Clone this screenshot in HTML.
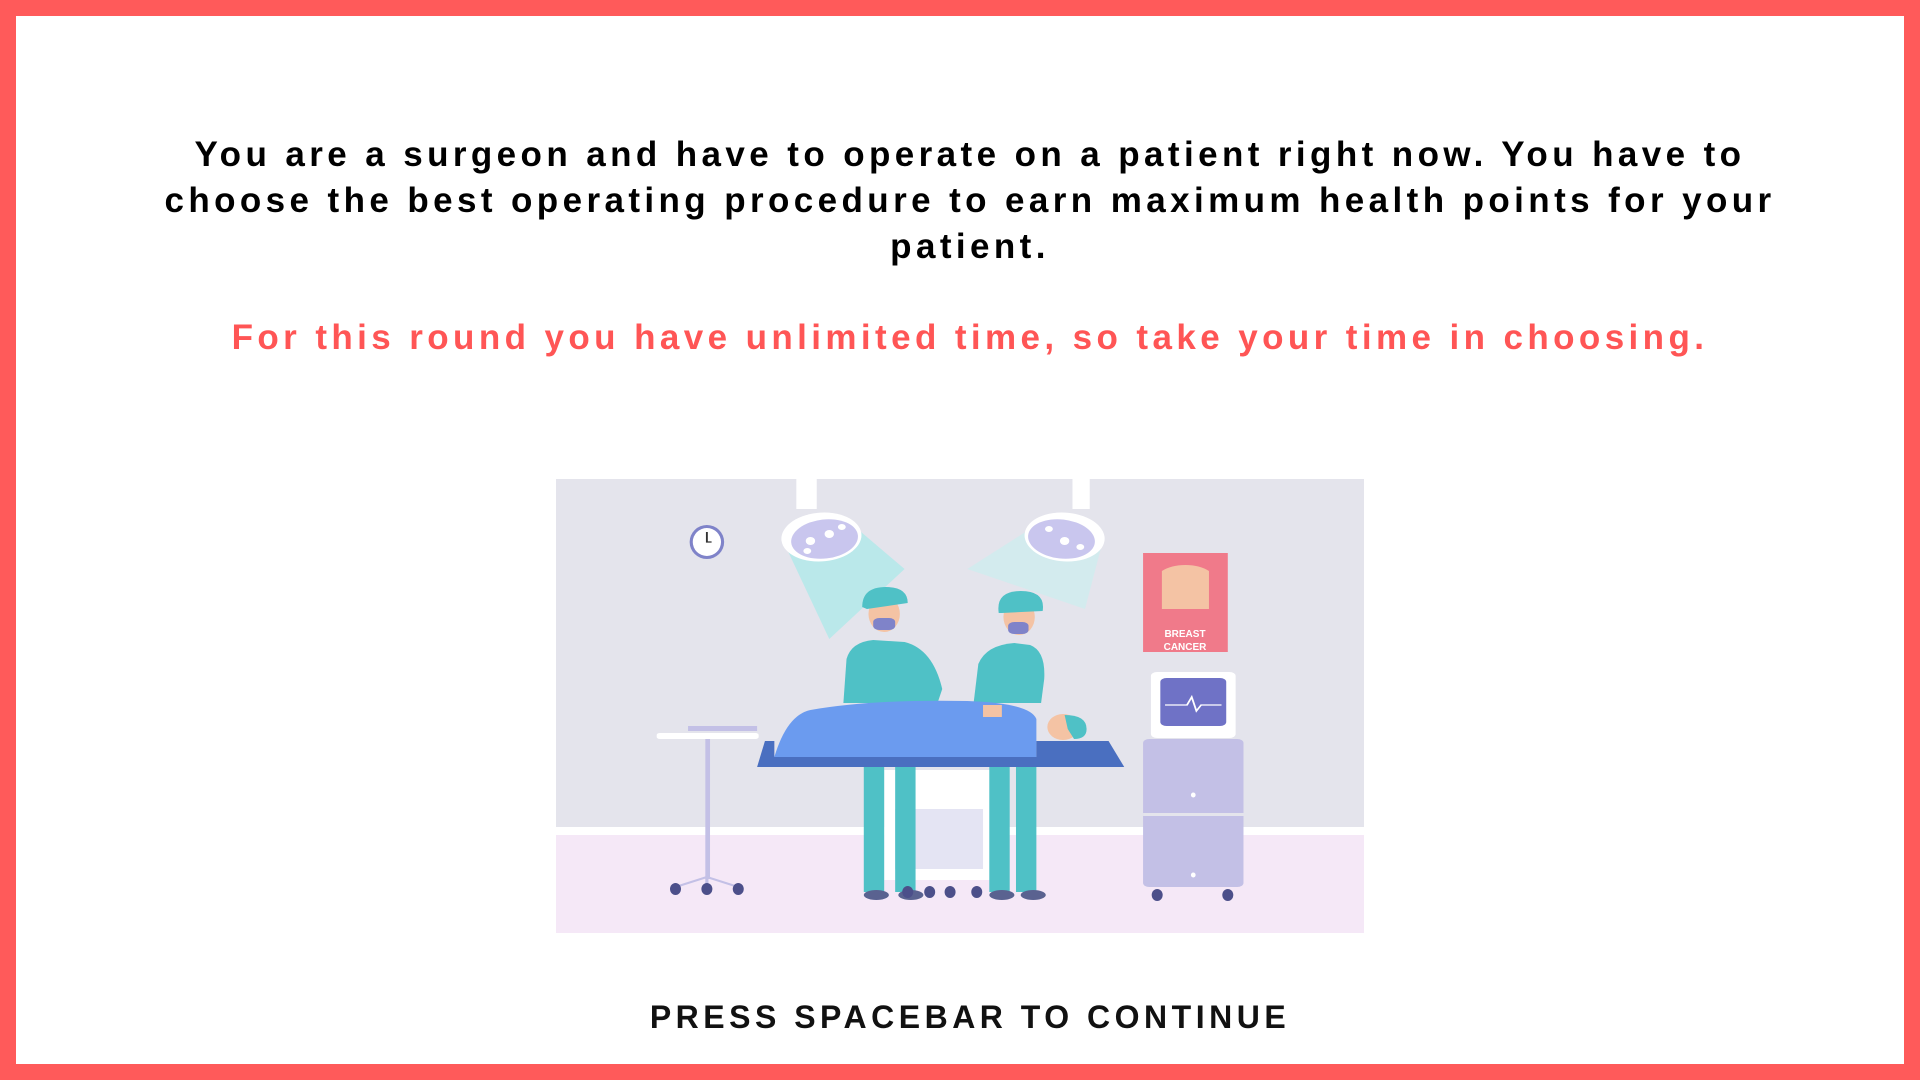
<!DOCTYPE html>
<html><head><meta charset="utf-8"><style>
html,body{margin:0;padding:0;}
body{width:1920px;height:1080px;position:relative;background:#fff;overflow:hidden;font-family:"Comic Sans MS","Liberation Sans",sans-serif;}
.frame{position:absolute;left:0;top:0;width:1920px;height:1080px;box-sizing:border-box;border:16px solid #ff5a5a;}
.t{position:absolute;left:140px;width:1660px;text-align:center;font-size:35px;font-weight:bold;letter-spacing:4.4px;color:#000;line-height:46px;}
.r{color:#ff5555;}
.btn{position:absolute;left:10px;width:1920px;top:999px;text-align:center;font-weight:bold;font-size:32px;letter-spacing:4.5px;color:#111;}
svg{position:absolute;left:556px;top:479px;}
</style></head><body>
<div class="frame"></div>
<div class="t" style="top:132px">You are a surgeon and have to operate on a patient right now. You have to choose the best operating procedure to earn maximum health points for your patient.</div>
<div class="t r" style="top:315px">For this round you have unlimited time, so take your time in choosing.</div>
<svg width="808" height="454" viewBox="0 0 808 454">
<rect width="808" height="454" fill="#e4e4ec"/>
<rect y="348" width="808" height="8" fill="#fff"/>
<rect y="356" width="808" height="98" fill="#f5e8f7"/>
<g transform="translate(3.4,0) scale(1.569,1)">
<ellipse cx="94" cy="63" rx="11" ry="17" fill="#7f83c9"/><ellipse cx="94" cy="63" rx="9" ry="14" fill="#fff"/>
<path d="M94 53V63H97" stroke="#333" stroke-width="1.2" fill="none"/>
<polygon points="145,70 190,50 220,90 172,160" fill="#a8eaea" opacity=".7"/>
<polygon points="300,50 345,70 335,130 260,90" fill="#c8f0f0" opacity=".6"/>
<rect x="151" y="0" width="13" height="30" fill="#fff"/>
<rect x="327" y="0" width="11" height="30" fill="#fff"/>
<ellipse cx="167" cy="58" rx="26" ry="24" transform="rotate(-30 167 58)" fill="#fff"/>
<ellipse cx="169" cy="60" rx="22" ry="19" transform="rotate(-30 169 60)" fill="#c9c6ee"/>
<ellipse cx="322" cy="58" rx="26" ry="24" transform="rotate(30 322 58)" fill="#fff"/>
<ellipse cx="320" cy="60" rx="22" ry="19" transform="rotate(30 320 60)" fill="#c9c6ee"/>
<g fill="#fff"><ellipse cx="160" cy="62" rx="3" ry="4"/><ellipse cx="172" cy="55" rx="3" ry="4"/><ellipse cx="180" cy="48" rx="2.5" ry="3"/><ellipse cx="158" cy="72" rx="2.5" ry="3"/><ellipse cx="312" cy="50" rx="2.5" ry="3"/><ellipse cx="322" cy="62" rx="3" ry="4"/><ellipse cx="332" cy="68" rx="2.5" ry="3"/></g>
<rect x="372" y="74" width="54" height="99" fill="#f07a8a"/>
<path d="M384 92Q390 86 399 86Q408 86 414 92V130H384Z" fill="#f4c3a4"/>
<rect x="377" y="193" width="54" height="66" rx="4" fill="#fff"/>
<rect x="383" y="199" width="42" height="48" rx="4" fill="#6f72c6"/>
<path d="M386 226H400L403 218L406 232L409 226H422" stroke="#fff" stroke-width="1.2" fill="none"/>
<rect x="372" y="260" width="64" height="148" rx="4" fill="#c3c0e6"/>
<rect x="372" y="334" width="64" height="3" fill="#e4e4ec"/>
<ellipse cx="404" cy="316" rx="1.5" ry="2.5" fill="#fff"/><ellipse cx="404" cy="396" rx="1.5" ry="2.5" fill="#fff"/>
<ellipse cx="381" cy="416" rx="3.5" ry="6" fill="#4c4f8a"/><ellipse cx="426" cy="416" rx="3.5" ry="6" fill="#4c4f8a"/>
<rect x="62" y="254" width="65" height="6" rx="2" fill="#fff"/>
<rect x="82" y="247" width="44" height="5" fill="#c3c0e6"/>
<rect x="93" y="260" width="3" height="140" fill="#c3c0e6"/>
<path d="M94 398L74 408M94 398L94 408M94 398L114 408" stroke="#c3c0e6" stroke-width="2"/>
<g fill="#4c4f8a"><ellipse cx="74" cy="410" rx="3.5" ry="6"/><ellipse cx="94" cy="410" rx="3.5" ry="6"/><ellipse cx="114" cy="410" rx="3.5" ry="6"/></g>
<rect x="207" y="291" width="70" height="110" fill="#fff"/>
<rect x="214" y="330" width="56" height="60" fill="#e4e4f3"/>
<rect x="194" y="288" width="13" height="125" fill="#4fc1c6"/>
<rect x="214" y="288" width="13" height="125" fill="#4fc1c6"/>
<rect x="274" y="288" width="13" height="125" fill="#4fc1c6"/>
<rect x="291" y="288" width="13" height="125" fill="#4fc1c6"/>
<g fill="#5a6290"><ellipse cx="202" cy="416" rx="8" ry="5"/><ellipse cx="224" cy="416" rx="8" ry="5"/><ellipse cx="282" cy="416" rx="8" ry="5"/><ellipse cx="302" cy="416" rx="8" ry="5"/></g>
<g fill="#4c4f8a"><ellipse cx="222" cy="413" rx="3.5" ry="6"/><ellipse cx="236" cy="413" rx="3.5" ry="6"/><ellipse cx="249" cy="413" rx="3.5" ry="6"/><ellipse cx="266" cy="413" rx="3.5" ry="6"/></g>
<path d="M181 224L183 180Q186 163 200 161L220 163Q238 170 244 210L241 224Z" fill="#4fc1c6"/>
<ellipse cx="207" cy="135" rx="10" ry="18" fill="#f4c3a4"/>
<path d="M193 128Q193 108 208 108Q222 108 222 124L196 130Z" fill="#4fc1c6"/>
<rect x="200" y="139" width="14" height="12" rx="4" fill="#7f83c9"/>
<path d="M264 224L267 185Q272 166 290 164L300 166Q310 172 309 200L307 224Z" fill="#4fc1c6"/>
<ellipse cx="293" cy="138" rx="10" ry="18" fill="#f4c3a4"/>
<path d="M280 134Q278 112 294 112Q310 112 308 132L282 134Z" fill="#4fc1c6"/>
<rect x="286" y="143" width="13" height="12" rx="4" fill="#7f83c9"/>
<path d="M137 278Q145 236 160 231Q200 220 260 222Q300 224 304 240L304 278Z" fill="#6b9bef"/>
<rect x="270" y="226" width="12" height="12" fill="#f4c3a4"/>
<ellipse cx="321" cy="248" rx="10" ry="13" fill="#f4c3a4"/>
<path d="M322 236Q336 236 336 250Q336 260 328 260L324 250Z" fill="#4fc1c6"/>
<path d="M131 262H137V278H304V262H350L360 288H126Z" fill="#4a6fc0"/>
</g>
<text x="629" y="158" font-size="10" font-weight="bold" fill="#fff" text-anchor="middle" font-family="Liberation Sans,sans-serif">BREAST</text>
<text x="629" y="171" font-size="10" font-weight="bold" fill="#fff" text-anchor="middle" font-family="Liberation Sans,sans-serif">CANCER</text>
</svg>
<div class="btn">PRESS SPACEBAR TO CONTINUE</div>
</body></html>
